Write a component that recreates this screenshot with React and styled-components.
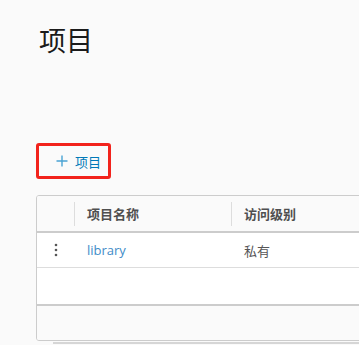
import React from "react";
import styled, { createGlobalStyle } from "styled-components";

const Global = createGlobalStyle`
  html, body { margin: 0; padding: 0; background: #fafafa; overflow: hidden; }
  body { font-family: "Open Sans", "Noto Sans CJK SC", sans-serif; }
`;

const Page = styled.div`
  width: 359px;
  height: 345px;
  overflow: hidden;
  padding-left: 36px;
  box-sizing: border-box;
`;

const Title = styled.h1`
  margin: 0;
  padding: 22px 0 0 3px;
  height: 106px;
  box-sizing: border-box;
  font-family: "Noto Sans CJK SC", sans-serif;
  font-weight: 400;
  font-size: 27px;
  line-height: 36px;
  color: #1b1b1b;
`;

const Toolbar = styled.div`
  display: flex;
  height: 37px;
  margin-top: 37px;
`;

const AddButton = styled.button`
  display: flex;
  align-items: center;
  gap: 7px;
  box-sizing: border-box;
  width: 75px;
  height: 36px;
  padding: 0 0 0 17px;
  border: 3px solid #f2231c;
  border-radius: 3px;
  background: transparent;
  font-family: "Noto Sans CJK SC", sans-serif;
  font-size: 13px;
  color: #0079b8;
  cursor: pointer;
`;

const Grid = styled.div`
  margin-top: 15px;
  width: 520px;
  border: 1px solid #ccc;
  border-radius: 3px;
  background: #fff;
  overflow: hidden;
`;

const Row = styled.div`
  display: grid;
  grid-template-columns: 37px 157px 1fr;
  height: ${(p) => p.$h}px;
  align-items: center;
  background: ${(p) => p.$bg || "#fff"};
  border-bottom: ${(p) => p.$border || "none"};
  box-sizing: content-box;
`;

const HeadCell = styled.div`
  height: 24px;
  display: flex;
  align-items: center;
  padding-left: 12px;
  border-left: ${(p) => (p.$sep ? "1px solid #ddd" : "none")};
  font-family: "Noto Sans CJK SC", sans-serif;
  font-size: 13px;
  font-weight: 700;
  color: #4f4f4f;
`;

const Cell = styled.div`
  padding-left: ${(p) => (p.$first ? 0 : 13)}px;
  display: flex;
  align-items: center;
  justify-content: ${(p) => (p.$first ? "center" : "flex-start")};
  font-size: 13px;
  color: #565656;
  font-family: "Open Sans", "Noto Sans CJK SC", sans-serif;
`;

const Link = styled.a`
  color: #3f8cc8;
  text-decoration: none;
  font-family: "Open Sans", sans-serif;
  font-size: 13px;
`;

const Footer = styled.div`
  height: 34px;
  background: #fafafa;
`;

const Scroll = styled.div`
  margin: 1px 0 0 17px;
  height: 2px;
  background: #d6d6d6;
`;

const Plus = () => (
  <svg width="12" height="12" viewBox="0 0 12 12">
    <path d="M6 0.5V11.5M0.5 6H11.5" stroke="#49a3d3" strokeWidth="1.4" />
  </svg>
);

const Dots = () => (
  <svg width="4" height="14" viewBox="0 0 4 14">
    <circle cx="2" cy="2" r="1.3" fill="#565656" />
    <circle cx="2" cy="7" r="1.3" fill="#565656" />
    <circle cx="2" cy="12" r="1.3" fill="#565656" />
  </svg>
);

export default function App() {
  return (
    <Page>
      <Global />
      <Title>项目</Title>
      <Toolbar>
        <AddButton>
          <Plus />
          <span>项目</span>
        </AddButton>
      </Toolbar>
      <Grid>
        <Row $h={35} $bg="#fafafa" $border="2px solid #ccc">
          <HeadCell />
          <HeadCell $sep>项目名称</HeadCell>
          <HeadCell $sep>访问级别</HeadCell>
        </Row>
        <Row $h={34} $border="1px solid #ddd">
          <Cell $first>
            <Dots />
          </Cell>
          <Cell>
            <Link>library</Link>
          </Cell>
          <Cell>私有</Cell>
        </Row>
        <Row $h={36} $border="2px solid #ccc" />
        <Footer />
      </Grid>
      <Scroll />
    </Page>
  );
}
